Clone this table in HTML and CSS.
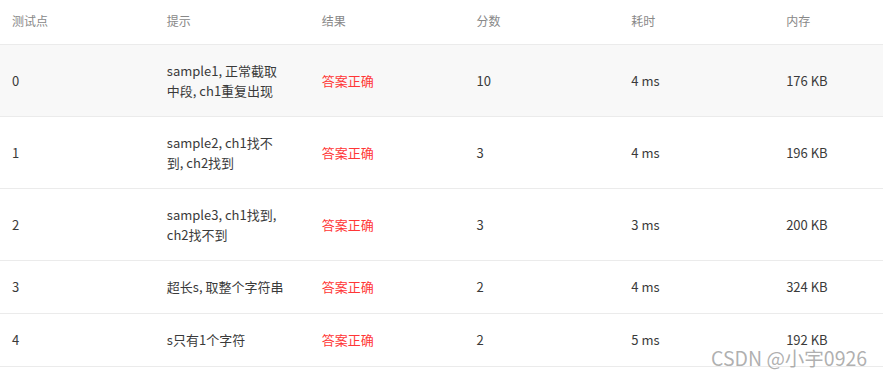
FILE: index.html
```html
<!DOCTYPE html>
<html lang="zh">
<head>
<meta charset="utf-8">
<link rel="stylesheet" href="styles.css">
</head>
<body>
<div class="wrap">
<table class="result">
  <thead>
    <tr><th>测试点</th><th>提示</th><th>结果</th><th>分数</th><th>耗时</th><th>内存</th></tr>
  </thead>
  <tbody>
    <tr class="hover"><td>0</td><td class="hint">sample1, 正常截取中段, ch1重复出现</td><td class="ok">答案正确</td><td>10</td><td>4 ms</td><td>176 KB</td></tr>
    <tr><td>1</td><td class="hint">sample2, ch1找不到, ch2找到</td><td class="ok">答案正确</td><td>3</td><td>4 ms</td><td>196 KB</td></tr>
    <tr><td>2</td><td class="hint">sample3, ch1找到, ch2找不到</td><td class="ok">答案正确</td><td>3</td><td>3 ms</td><td>200 KB</td></tr>
    <tr><td>3</td><td class="hint">超长s, 取整个字符串</td><td class="ok">答案正确</td><td>2</td><td>4 ms</td><td>324 KB</td></tr>
    <tr><td>4</td><td class="hint">s只有1个字符</td><td class="ok">答案正确</td><td>2</td><td>5 ms</td><td>192 KB</td></tr>
  </tbody>
</table>
<div class="watermark">CSDN @小宇0926</div>
</div>
</body>
</html>
```
FILE: styles.css
```css
html, body {
  margin: 0;
  padding: 0;
  background: #fff;
  overflow: hidden;
}
.wrap {
  position: relative;
  width: 883px;
  height: 372px;
  overflow: hidden;
}
.result {
  width: 929px;
  border-collapse: collapse;
  table-layout: fixed;
  font-family: "Noto Sans CJK SC", "Noto Sans", sans-serif;
  font-size: 13px;
  line-height: 20px;
  color: #3a3a3a;
}
.result th {
  text-align: left;
  font-weight: normal;
  color: #888;
  font-size: 12px;
  padding: 11px 12px 13px;
  border-bottom: 1px solid #ebebeb;
}
.result td {
  padding: 16px 12px 16px;
  border-bottom: 1px solid #ebebeb;
  vertical-align: middle;
}
.result tr.hover td {
  background: #f8f8f8;
}
.result td.hint {
  padding-right: 24px;
  line-height: 19.5px;
}
.result td.ok {
  color: #ff3636;
}
.watermark {
  position: absolute;
  left: 711px;
  top: 346px;
  font-family: "Noto Sans CJK SC", "Noto Sans", sans-serif;
  font-size: 19.5px;
  line-height: 24px;
  color: rgba(150, 150, 150, 0.75);
  white-space: nowrap;
}
```
